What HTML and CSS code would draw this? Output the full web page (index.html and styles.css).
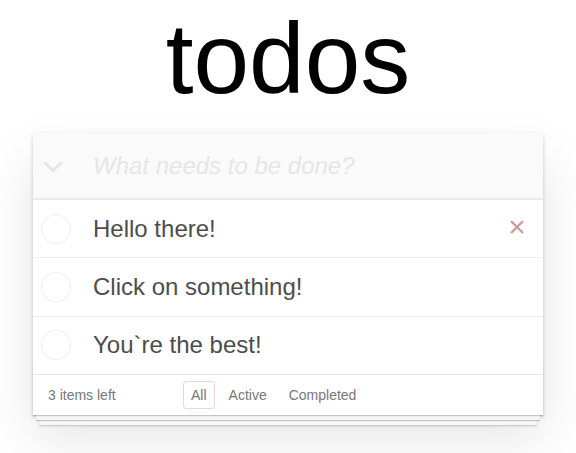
FILE: index.html
```html
<!DOCTYPE html>
<html lang="en">
<head>
<meta charset="utf-8">
<title>todos</title>
<link rel="stylesheet" href="styles.css">
</head>
<body>
<h1 class="title">todos</h1>
<section class="todoapp">
  <header class="header">
    <svg class="toggle-all" width="20" height="12" viewBox="0 0 20 12"><path d="M1.5 1.5 L10 9.5 L18.5 1.5" fill="none" stroke="#e6e6e6" stroke-width="3"/></svg>
    <input class="new-todo" placeholder="What needs to be done?">
  </header>
  <ul class="todo-list">
    <li class="todo">
      <svg class="toggle" width="30" height="30" viewBox="0 0 30 30"><circle cx="15" cy="15" r="14.6" fill="none" stroke="#ededed" stroke-width="1"/></svg>
      <label class="todo-label">Hello there!</label>
      <button class="destroy">×</button>
    </li>
    <li class="todo">
      <svg class="toggle" width="30" height="30" viewBox="0 0 30 30"><circle cx="15" cy="15" r="14.6" fill="none" stroke="#ededed" stroke-width="1"/></svg>
      <label class="todo-label">Click on something!</label>
    </li>
    <li class="todo">
      <svg class="toggle" width="30" height="30" viewBox="0 0 30 30"><circle cx="15" cy="15" r="14.6" fill="none" stroke="#ededed" stroke-width="1"/></svg>
      <label class="todo-label">You`re the best!</label>
    </li>
  </ul>
  <footer class="footer">
    <span class="todo-count">3 items left</span>
    <ul class="filters">
      <li><a class="filter selected" href="#/">All</a></li>
      <li><a class="filter" href="#/active">Active</a></li>
      <li><a class="filter" href="#/completed">Completed</a></li>
    </ul>
  </footer>
</section>
</body>
</html>
```
FILE: styles.css
```css
html, body {
  margin: 0;
  padding: 0;
}

body {
  min-height: 100vh;
  font: 14px "Liberation Sans", Arial, sans-serif;
  line-height: 1.4em;
  background: #fff;
  color: #4d4d4d;
}

.title {
  margin: 1px 0 17px;
  font-size: 100px;
  line-height: 115px;
  font-weight: normal;
  color: #000;
  text-align: center;
}

.todoapp {
  width: 510px;
  margin: 0 auto;
  background: #fff;
  position: relative;
  box-shadow: 0 2px 4px 0 rgba(0, 0, 0, 0.2), 0 25px 50px 0 rgba(0, 0, 0, 0.1);
}

.header {
  display: flex;
  align-items: center;
  height: 66px;
  background: rgba(0, 0, 0, 0.02);
  box-shadow: inset 0 -2px 1px rgba(0, 0, 0, 0.03);
}

.toggle-all {
  flex: none;
  margin-left: 10px;
  margin-top: 2px;
}

.new-todo {
  flex: 1;
  min-width: 0;
  height: 66px;
  box-sizing: border-box;
  margin: 0;
  padding: 16px 16px 16px 30px;
  border: none;
  outline: none;
  background: transparent;
  font: 24px "Liberation Sans", Arial, sans-serif;
  line-height: 1.4em;
  color: #4d4d4d;
}

.new-todo::placeholder {
  font-style: italic;
  color: #e6e6e6;
}

.todo-list {
  margin: 0;
  padding: 0;
  list-style: none;
  border-top: 1px solid #e6e6e6;
}

.todo {
  display: flex;
  align-items: center;
  position: relative;
  border-bottom: 1px solid #ededed;
  font-size: 24px;
}

.todo:last-child {
  border-bottom: none;
}

.toggle {
  flex: none;
  margin-left: 8px;
}

.todo-label {
  flex: 1;
  display: block;
  padding: 14.5px 15px 14px 22px;
  line-height: 28.8px;
  color: #4d4d4d;
  word-break: break-all;
}

.destroy {
  flex: none;
  width: 40px;
  height: 40px;
  margin: 0 6px 3px 0;
  padding: 0;
  border: none;
  background: none;
  font: 30px "Liberation Sans", Arial, sans-serif;
  line-height: 40px;
  color: #cc9a9a;
  text-align: center;
}

.footer {
  position: relative;
  display: flex;
  align-items: center;
  height: 20px;
  padding: 10px 15px;
  color: #777;
  border-top: 1px solid #e6e6e6;
}

.footer::before {
  content: '';
  position: absolute;
  right: 0;
  bottom: 0;
  left: 0;
  height: 50px;
  overflow: hidden;
  pointer-events: none;
  box-shadow: 0 1px 1px rgba(0, 0, 0, 0.2),
              0 8px 0 -3px #f6f6f6,
              0 9px 1px -3px rgba(0, 0, 0, 0.2),
              0 16px 0 -6px #f6f6f6,
              0 17px 2px -6px rgba(0, 0, 0, 0.2);
}

.todo-count {
  flex: none;
  width: 132px;
  padding-top: 2px;
}

.filters {
  display: flex;
  margin: 0;
  padding: 0;
  list-style: none;
}

.filter {
  display: block;
  margin: 3px;
  padding: 4px 7px 2px;
  line-height: 19.6px;
  color: inherit;
  text-decoration: none;
  border: 1px solid transparent;
  border-radius: 3px;
}

.filter.selected {
  border-color: rgba(175, 47, 47, 0.2);
}
```
